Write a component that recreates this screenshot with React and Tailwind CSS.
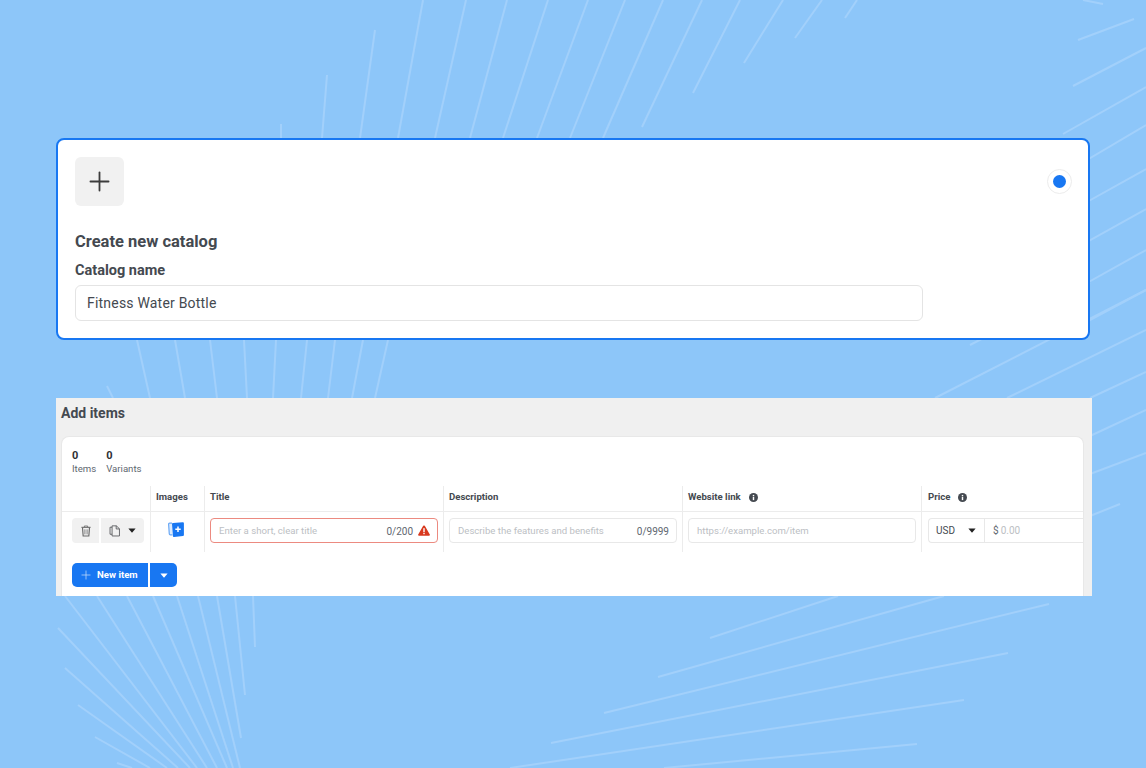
import React from "react";
import { Plus } from "lucide-react";

const lines = [
  [281,124,281,138],[327,75,322,138],[375,30,360,138],[423,0,398,138],[466,0,435,138],[507,0,470,138],[548,0,503,138],[588,0,537,138],[625,0,570,138],[663,0,603,138],[702,0,642,127],[740,0,693,93],[783,0,744,63],[822,0,795,38],[857,0,845,18],
  [1083,0,1103,4],[1078,40,1134,19],[1073,86,1146,48],[1063,134,1146,87],[1070,170,1146,125],[1060,217,1146,169],[1060,257,1146,209],[1060,298,1146,250],[1060,336,1146,290],[935,398,1146,290],[1007,398,1146,330],[1090,398,1146,372],[970,345,1090,283],
  [137,340,150,398],[175,340,185,398],[210,340,217,398],[244,340,247,398],[276,340,273,398],[307,340,301,398],[335,340,328,398],[363,340,352,398],[388,340,375,398],[107,386,113,398],
  [1090,436,1146,410],[1090,474,1146,453],[1090,516,1120,504],
  [65,596,197,768],[97,596,207,768],[127,596,217,768],[153,596,227,768],[177,596,233,768],[198,596,240,768],[217,596,241,738],[235,596,245,695],[253,596,255,647],
  [58,628,190,768],[65,668,178,768],[78,705,167,768],[95,737,150,768],[117,763,132,768],
  [710,638,838,596],[658,677,944,596],[604,713,1049,604],[551,743,1008,653],[510,768,964,700],[664,768,917,744],
];

function Caret({ className = "" }) {
  return (
    <svg viewBox="0 0 10 6" className={className} fill="currentColor"><path d="M0.5 0.5h9L5.6 5.2a.8.8 0 0 1-1.2 0z" /></svg>
  );
}

function InfoDot() {
  return (
    <svg viewBox="0 0 10 10" className="w-[9px] h-[9px]">
      <circle cx="5" cy="5" r="5" fill="#444950" />
      <rect x="4.2" y="4.3" width="1.6" height="3.6" fill="#fff" />
      <rect x="4.2" y="2.1" width="1.6" height="1.5" fill="#fff" />
    </svg>
  );
}

function TrashIcon() {
  return (
    <svg viewBox="0 0 12 14" className="w-[10px] h-[12px] text-[#6a6a6a]" fill="none" stroke="currentColor">
      <path d="M0.5 2.6h11" strokeWidth="1.3" />
      <path d="M4 2.4V1h4v1.4" strokeWidth="1" />
      <path d="M1.8 3l.8 10h6.8l.8-10" strokeWidth="1.4" />
      <path d="M4.7 5v6M7.3 5v6" strokeWidth="1" />
    </svg>
  );
}

function CopyIcon() {
  return (
    <svg viewBox="0 0 14 14" className="w-[12px] h-[12px] text-[#55575a]" fill="none" stroke="currentColor" strokeWidth="1">
      <path d="M3.6 2.6H1.2v8.2h2.4" />
      <path d="M3.6 1h5l3.6 3.4v8.4H3.6z" />
      <path d="M8.4 1v3.6h3.8" />
    </svg>
  );
}

function ImageAdd() {
  return (
    <svg viewBox="0 0 16 15" className="w-[16px] h-[15px]">
      <path d="M4 1.2H1.6a1 1 0 0 0-1 1.1l.7 9.6a1 1 0 0 0 1 .9H4.4" fill="#dcebfd" stroke="#6aa8f5" strokeWidth="1.2" />
      <path d="M5 1 14.8 0.2a1 1 0 0 1 1.1 1V13a1 1 0 0 1-1 1L6 14.9a1 1 0 0 1-1.1-1L4 2a1 1 0 0 1 1-1z" fill="#1877f2" />
      <path d="M10 4.6v5.4M7.3 7.3h5.4" stroke="#fff" strokeWidth="1.5" />
    </svg>
  );
}

function WarnIcon() {
  return (
    <svg viewBox="0 0 12 11" className="w-[12px] h-[11px] -mt-px">
      <path d="M6 .4a.9.9 0 0 1 .8.45l5 8.6a.9.9 0 0 1-.8 1.35H1a.9.9 0 0 1-.8-1.35l5-8.6A.9.9 0 0 1 6 .4z" fill="#d8391f" />
      <rect x="5.3" y="3.2" width="1.4" height="3.9" fill="#fff" />
      <rect x="5.3" y="7.8" width="1.4" height="1.4" fill="#fff" />
    </svg>
  );
}

function Th({ className = "", children }) {
  return (
    <div className={`flex items-center gap-[8px] pl-[5px] pb-[2px] text-[9.6px] font-bold text-[#444950] border-l border-[#ececec] h-full ${className}`}>
      {children}
    </div>
  );
}

function Cell({ className = "", children }) {
  return <div className={`border-l border-[#ececec] pl-[5px] pr-[5px] pt-[6px] h-[40px] ${className}`}>{children}</div>;
}

export default function App() {
  return (
    <div className="relative w-[1146px] h-[768px] overflow-hidden bg-[#8dc6f9] font-['Roboto',sans-serif]">
      <svg className="absolute inset-0 w-full h-full" viewBox="0 0 1146 768" fill="none">
        {lines.map((l, i) => (
          <line key={i} x1={l[0]} y1={l[1]} x2={l[2]} y2={l[3]} stroke="#a2d0fb" strokeWidth="2" />
        ))}
      </svg>

      <div className="relative pt-[138px] pl-[56px] flex flex-col items-start">
        <div className="w-[1034px] h-[202px] bg-white border-2 border-[#1877f2] rounded-[8px] pl-[17px] pt-[17px] pr-[16px] flex flex-col">
          <div className="flex items-start justify-between">
            <div className="w-[49px] h-[49px] rounded-[6px] bg-[#f1f1f1] flex items-center justify-center">
              <Plus className="w-[31px] h-[31px] text-[#3c3c3c]" strokeWidth={1.4} />
            </div>
            <div className="mt-[12px] w-[25px] h-[25px] rounded-full border border-[#ececec] flex items-center justify-center">
              <div className="w-[13px] h-[13px] rounded-full bg-[#1877f2]" />
            </div>
          </div>
          <div className="mt-[26px] text-[16.5px] leading-[20px] font-bold text-[#444950]">Create new catalog</div>
          <div className="mt-[10px] text-[14.5px] leading-[18px] font-bold text-[#444950]">Catalog name</div>
          <div className="mt-[5px] w-[848px] h-[36px] rounded-[6px] border border-[#e4e4e4] pl-[11px] flex items-center text-[14px] text-[#444950] tracking-[0.2px]">
            Fitness Water Bottle
          </div>
        </div>

        <div className="mt-[58px] w-[1036px] h-[198px] bg-[#f0f0f0] overflow-hidden flex flex-col">
          <div className="h-[38px] pl-[5px] pt-[6px] text-[14px] leading-[18px] font-bold text-[#444950]">Add items</div>
          <div className="ml-[5px] w-[1023px] h-[160px] bg-white rounded-t-[8px] border-t border-x border-[#e8e8e8] flex flex-col">
            <div className="flex gap-[10px] pl-[10px] pt-[12px] h-[49px]">
              <div className="text-[9.6px] leading-[13px] text-[#606770]">
                <div className="text-[11px] font-bold text-[#2f3136]">0</div>
                <div>Items</div>
              </div>
              <div className="text-[9.6px] leading-[13px] text-[#606770]">
                <div className="text-[11px] font-bold text-[#2f3136]">0</div>
                <div>Variants</div>
              </div>
            </div>
            <div className="h-[26px] grid grid-cols-[88px_54px_239px_239px_239px_1fr] border-b border-[#ececec]">
              <div />
              <Th>Images</Th>
              <Th>Title</Th>
              <Th>Description</Th>
              <Th>Website link <InfoDot /></Th>
              <Th className="!pl-[6px]">Price <InfoDot /></Th>
            </div>
            <div className="grid grid-cols-[88px_54px_239px_239px_239px_1fr]">
              <div className="pl-[10px] pt-[6px] flex gap-[2px] h-[40px]">
                <div className="w-[27px] h-[25px] rounded-l-[4px] bg-[#f1f1f1] flex items-center justify-center">
                  <TrashIcon />
                </div>
                <div className="w-[43px] h-[25px] rounded-r-[4px] bg-[#f1f1f1] flex items-center justify-center gap-[7px]">
                  <CopyIcon />
                  <Caret className="w-[8px] h-[5px] text-[#222]" />
                </div>
              </div>
              <Cell className="flex justify-center !pt-[10px] !pl-0 !pr-[4px]">
                <ImageAdd />
              </Cell>
              <Cell>
                <div className="h-[25px] pt-px rounded-[4px] border-[1.5px] border-[#ec8a80] flex items-center pl-[8px] pr-[7px] text-[9.6px]">
                  <span className="text-[#bcc0c4] flex-1">Enter a short, clear title</span>
                  <span className="text-[#606770] text-[10px] mr-[5px]">0/200</span>
                  <WarnIcon />
                </div>
              </Cell>
              <Cell>
                <div className="h-[25px] pt-px rounded-[4px] border border-[#e8e8e8] flex items-center pl-[8px] pr-[7px] text-[9.6px]">
                  <span className="text-[#bcc0c4] flex-1">Describe the features and benefits</span>
                  <span className="text-[#606770] text-[10px]">0/9999</span>
                </div>
              </Cell>
              <Cell>
                <div className="h-[25px] pt-px rounded-[4px] border border-[#e8e8e8] flex items-center pl-[8px] text-[9.6px] text-[#bcc0c4]">
                  https://example.com/item
                </div>
              </Cell>
              <Cell className="!pr-0 !pl-[6px]">
                <div className="h-[25px] rounded-l-[4px] border-y border-l border-[#e8e8e8] flex items-center text-[10px]">
                  <div className="w-[56px] h-full border-r border-[#e8e8e8] flex items-center pl-[7px] gap-[13px] text-[#444950]">
                    <span>USD</span>
                    <Caret className="w-[8px] h-[5px] text-[#222]" />
                  </div>
                  <span className="pl-[8px] text-[#606770]">$</span>
                  <span className="pl-[2px] text-[#bcc0c4]">0.00</span>
                </div>
              </Cell>
            </div>
            <div className="mt-[11px] ml-[10px] flex gap-[2px]">
              <div className="w-[76px] h-[24px] rounded-l-[5px] bg-[#1877f2] flex items-center pl-[7px] gap-[4px] text-[9.6px] font-bold text-white">
                <Plus className="w-[14px] h-[14px] text-[#cfe2fb]" strokeWidth={1.2} />
                New item
              </div>
              <div className="w-[27px] h-[24px] rounded-r-[5px] bg-[#1877f2] flex items-center justify-center">
                <Caret className="w-[8px] h-[5px] text-white" />
              </div>
            </div>
          </div>
        </div>
      </div>
    </div>
  );
}
